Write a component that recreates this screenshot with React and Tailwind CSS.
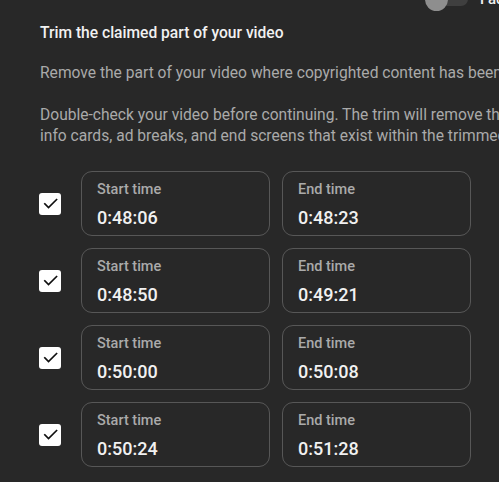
import React from "react";

const rows = [
  ["0:48:06", "0:48:23"],
  ["0:48:50", "0:49:21"],
  ["0:50:00", "0:50:08"],
  ["0:50:24", "0:51:28"],
];

function Check() {
  return (
    <div className="w-[22px] h-[22px] bg-white rounded-[3px] flex items-center justify-center shrink-0">
      <svg width="17" height="17" viewBox="0 0 24 24">
        <path d="M4 12.5l5.2 5.2L20.5 6.5" fill="none" stroke="#0f0f0f" strokeWidth="2.4" strokeLinecap="square" />
      </svg>
    </div>
  );
}

function TimeBox({ label, value }) {
  return (
    <div className="w-[189px] h-[65px] border border-[#575757] rounded-[11px] pl-[15px] pt-[8px] flex flex-col shrink-0">
      <div className="text-[14.5px] leading-[20px] font-medium text-[#aaaaaa]">{label}</div>
      <div className="mt-[6px] text-[18px] leading-[24px] font-medium text-[#f1f1f1]">{value}</div>
    </div>
  );
}

export default function App() {
  return (
    <div
      className="w-[499px] h-[482px] bg-[#282828] overflow-hidden flex flex-col"
      style={{ fontFamily: "Roboto, 'Noto Sans', sans-serif" }}
    >
      <div className="flex items-center -mt-[12px] h-[22px] pl-[425px] whitespace-nowrap">
        <div className="relative w-[44px] h-[22px] shrink-0">
          <div className="absolute left-[3px] top-[4px] w-[40px] h-[14px] rounded-full bg-[#3f3f3f]" />
          <div className="absolute left-0 top-0 w-[23px] h-[23px] rounded-full bg-[#8e8e8e]" />
        </div>
        <span className="ml-[11px] text-[15px] text-[#f1f1f1] font-medium">Fade</span>
      </div>
      <div className="pl-[40px]">
        <div className="mt-[12px] text-[15.6px] leading-[22px] font-medium text-[#f1f1f1]">
          Trim the claimed part of your video
        </div>
        <div className="mt-[19px] text-[15.6px] leading-[21px] text-[#aaaaaa] whitespace-nowrap">
          Remove the part of your video where copyrighted content has been found.
        </div>
        <div className="mt-[21px] text-[15.6px] leading-[21px] text-[#aaaaaa] whitespace-nowrap">
          <div>Double-check your video before continuing. The trim will remove the claimed part,</div>
          <div>info cards, ad breaks, and end screens that exist within the trimmed segments.</div>
        </div>
        <div className="mt-[24px] flex flex-col gap-[12px]">
          {rows.map(([s, e], i) => (
            <div key={i} className="flex items-center -ml-[1px]">
              <Check />
              <div className="ml-[20px] flex gap-[12px]">
                <TimeBox label="Start time" value={s} />
                <TimeBox label="End time" value={e} />
              </div>
            </div>
          ))}
        </div>
      </div>
    </div>
  );
}
